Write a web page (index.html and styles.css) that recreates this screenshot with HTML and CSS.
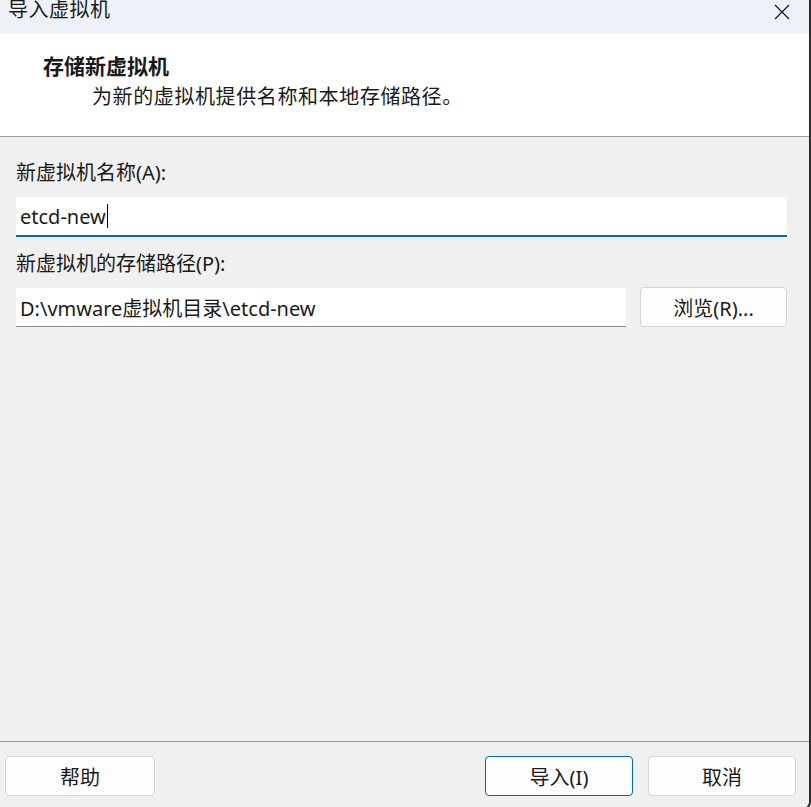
FILE: index.html
```html
<!DOCTYPE html>
<html lang="zh-CN">
<head>
    <meta charset="UTF-8">
    <meta name="viewport" content="width=device-width, initial-scale=1.0">
    <title>导入虚拟机</title>
    <link rel="stylesheet" href="styles.css">
</head>
<body>
    <div class="window">
        <div class="titlebar">
            <span class="title">导入虚拟机</span>
            <span class="close">
                <svg width="16" height="16" viewBox="0 0 16 16">
                    <path d="M1 1 L15 15 M15 1 L1 15" stroke="#1a1a1a" stroke-width="1.3" fill="none"/>
                </svg>
            </span>
        </div>

        <div class="header">
            <h2>存储新虚拟机</h2>
            <p>为新的虚拟机提供名称和本地存储路径。</p>
        </div>

        <div class="content">
            <label for="vm_name">新虚拟机名称(A):</label>
            <div class="field focused">
                <span class="value">etcd-new</span><span class="caret"></span>
            </div>

            <label for="vm_path">新虚拟机的存储路径(P):</label>
            <div class="path-row">
                <div class="field path">
                    <span class="value">D:\vmware虚拟机目录\etcd-new</span>
                </div>
                <button class="btn browse">浏览(R)...</button>
            </div>
        </div>

        <div class="footer">
            <button class="btn">帮助</button>
            <div class="footer-right">
                <button class="btn primary">导入(I)</button>
                <button class="btn">取消</button>
            </div>
        </div>
    </div>
</body>
</html>
```

FILE: styles.css
```css
/* General */
html, body {
  margin: 0;
  padding: 0;
  width: 811px;
  height: 807px;
  overflow: hidden;
}

body {
  font-family: "Segoe UI", "Noto Sans", "Noto Sans CJK SC", sans-serif;
  color: #1a1a1a;
  background: #f0f0f0;
}

.window {
  width: 809px;
  height: 808px;
  display: flex;
  flex-direction: column;
  background: #f0f0f0;
  border-right: 2px solid #2b2b2b;
  border-bottom: 2px solid #2b2b2b;
  border-bottom-right-radius: 8px;
}

/* Title bar */
.titlebar {
  height: 34px;
  flex-shrink: 0;
  background: #eef2f8;
  display: flex;
  justify-content: space-between;
  overflow: hidden;
}

.title {
  font-size: 20px;
  line-height: 22px;
  margin-top: -2px;
  padding-left: 8px;
  letter-spacing: 0.5px;
  font-family: "Noto Sans CJK SC", sans-serif;
}

.close {
  margin: 3px 19px 0 0;
}

/* Header */
.header {
  height: 103px;
  flex-shrink: 0;
  background: #ffffff;
  border-bottom: 1px solid #a0a0a0;
  padding: 0 0 0 43px;
  box-sizing: border-box;
}

.header h2 {
  margin: 17px 0 0;
  font-size: 21px;
  line-height: 28px;
  font-weight: bold;
  font-family: "Noto Sans CJK SC", serif;
}

.header p {
  margin: 3px 0 0 49px;
  font-size: 20px;
  line-height: 28px;
  font-family: "Noto Sans CJK SC", sans-serif;
  letter-spacing: 0.6px;
}

/* Form content */
.content {
  flex: 1;
  padding: 23px 22px 0 16px;
  display: flex;
  flex-direction: column;
}

label {
  font-size: 20px;
  line-height: 26px;
}

.field {
  background: #ffffff;
  height: 38px;
  box-sizing: border-box;
  display: flex;
  align-items: center;
  padding-left: 4px;
  font-size: 20px;
  border-bottom: 1px solid #8a8a8a;
}

.field.focused {
  margin: 11px 0 14px;
  border-bottom: 2px solid #0067c0;
  height: 40px;
}

.caret {
  width: 1px;
  height: 24px;
  background: #000;
  margin-left: 1px;
}

.path-row {
  display: flex;
  gap: 14px;
  margin-top: 11px;
}

.path-row .field {
  flex: 0 0 610px;
  height: 39px;
}

/* Buttons */
.btn {
  font-family: "Segoe UI", "Noto Sans", "Noto Sans CJK SC", sans-serif;
  font-size: 20px;
  color: #1a1a1a;
  background: #fdfdfd;
  border: 1px solid #d4d4d4;
  border-radius: 4px;
  height: 40px;
  width: 150px;
  padding: 0;
  cursor: pointer;
}

.browse {
  width: 147px;
  margin-top: -1px;
}

.footer-right .btn {
  width: 148px;
}

.primary {
  border-color: #0067c0;
}

/* Footer */
.footer {
  height: 67px;
  flex-shrink: 0;
  border-top: 1px solid #a0a0a0;
  display: flex;
  justify-content: space-between;
  padding: 14px 13px 0 5px;
  box-sizing: border-box;
}

.footer-right {
  display: flex;
  gap: 15px;
}
```
